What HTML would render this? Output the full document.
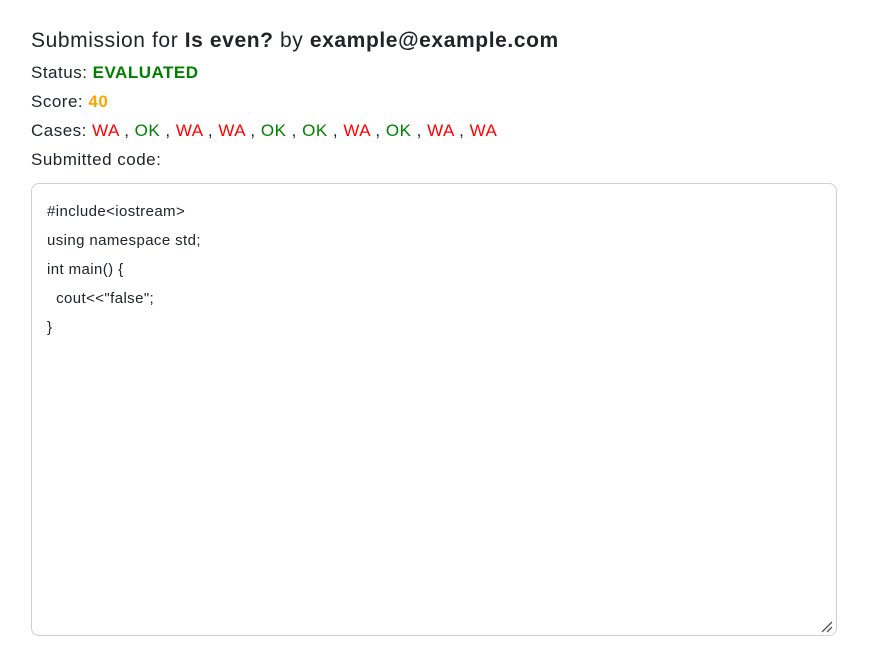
<!DOCTYPE html>
<html><head><meta charset="utf-8"><style>
html,body{margin:0;padding:0;background:#fff;width:873px;height:662px;overflow:hidden}
body{font-family:"Liberation Sans",sans-serif;color:#212529;}
.h{position:absolute;left:31px;top:27px;font-size:21px;letter-spacing:0.6px;line-height:28px;white-space:nowrap}
.l{position:absolute;left:31px;font-size:17px;letter-spacing:0.5px;line-height:22px;white-space:nowrap}
.r{color:#f00}.g{color:#008000}
.box{position:absolute;left:31px;top:183px;width:804px;height:451px;border:1px solid #d0d0d0;border-radius:8px;}
.code{position:absolute;left:47px;top:197px;font-size:15px;letter-spacing:0.4px;line-height:29px;white-space:pre;color:#212529}
</style></head><body>
<div class="h">Submission for <b>Is even?</b> by <b>example@example.com</b></div>
<div class="l" style="top:62px">Status: <b class="g">EVALUATED</b></div>
<div class="l" style="top:91px">Score: <b style="color:#ffa500">40</b></div>
<div class="l" style="top:120px">Cases: <span class="r">WA</span> , <span class="g">OK</span> , <span class="r">WA</span> , <span class="r">WA</span> , <span class="g">OK</span> , <span class="g">OK</span> , <span class="r">WA</span> , <span class="g">OK</span> , <span class="r">WA</span> , <span class="r">WA</span></div>
<div class="l" style="top:149px">Submitted code:</div>
<div class="box"></div>
<div class="code">#include&lt;iostream&gt;
using namespace std;
int main() {
  cout&lt;&lt;"false";
}</div>
<svg style="position:absolute;left:820px;top:620px" width="14" height="14"><path d="M2 12L12 2M7 12L12 7" stroke="#555" stroke-width="1.3"/></svg>
</body></html>
